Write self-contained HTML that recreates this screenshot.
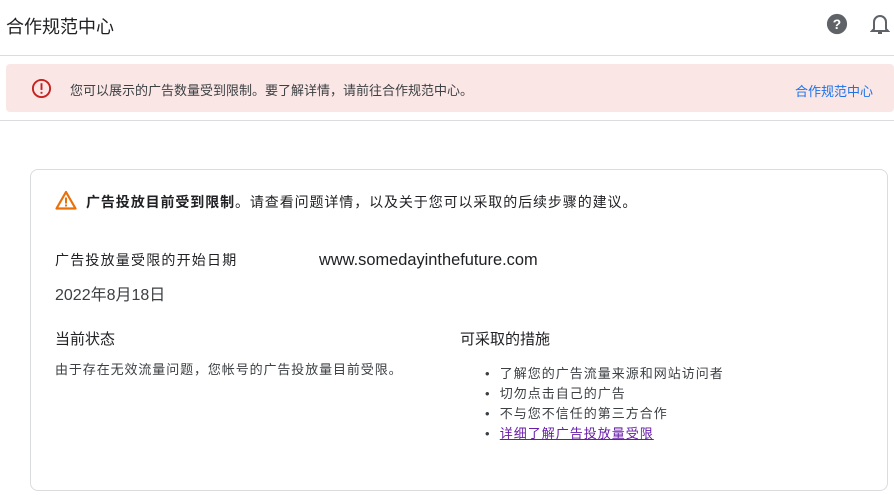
<!DOCTYPE html>
<html><head><meta charset="utf-8"><style>
*{margin:0;padding:0;box-sizing:border-box}
body{width:894px;height:495px;overflow:hidden;background:#fff;font-family:"Liberation Sans","Noto Sans CJK SC",sans-serif;color:#3c4043;position:relative}
.a{position:absolute;white-space:nowrap}
</style></head><body>
<div class="a" style="left:6px;top:13px;font-size:18px;color:#202124">合作规范中心</div>
<svg class="a" style="left:826px;top:13px" width="22" height="22" viewBox="0 0 24 24"><circle cx="12" cy="12" r="11" fill="#5f6368"/><text x="12" y="17.5" font-size="15" font-weight="bold" fill="#fff" text-anchor="middle" font-family="Liberation Sans">?</text></svg>
<svg class="a" style="left:870px;top:12px" width="20" height="24" viewBox="0 0 20 24"><path d="M4 17V10a6 6 0 0 1 12 0v7l2 2H2z" fill="none" stroke="#5f6368" stroke-width="2"/><path d="M8 21h4" stroke="#5f6368" stroke-width="2"/></svg>
<div class="a" style="left:0;top:55px;width:894px;height:1px;background:#dadce0"></div>
<div class="a" style="left:6px;top:64px;width:888px;height:48px;background:#fbe6e6;border-radius:4px"></div>
<svg class="a" style="left:31px;top:78px" width="21" height="21" viewBox="0 0 22 22"><circle cx="11" cy="11" r="9" fill="none" stroke="#c5221f" stroke-width="2"/><rect x="10" y="5.5" width="2" height="7" fill="#c5221f"/><rect x="10" y="14.5" width="2" height="2" fill="#c5221f"/></svg>
<div class="a" style="left:70px;top:80px;font-size:13px;color:#3c4043">您可以展示的广告数量受到限制。要了解详情，请前往合作规范中心。</div>
<div class="a" style="left:795px;top:81px;font-size:13px;color:#1a73e8">合作规范中心</div>
<div class="a" style="left:0;top:120px;width:894px;height:1px;background:#dadce0"></div>
<div class="a" style="left:30px;top:169px;width:858px;height:322px;border:1px solid #dadce0;border-radius:8px"></div>
<svg class="a" style="left:55px;top:190px" width="22" height="20" viewBox="0 0 22 20"><path d="M11 2L20.5 18.5H1.5Z" fill="none" stroke="#e8710a" stroke-width="2.2" stroke-linejoin="round"/><rect x="10" y="7.5" width="2" height="6" fill="#e8710a"/><rect x="10" y="14.5" width="2" height="2" fill="#e8710a"/></svg>
<div class="a" style="left:86px;top:192px;font-size:14px;letter-spacing:0.9px;color:#202124"><b>广告投放目前受到限制</b>。请查看问题详情，以及关于您可以采取的后续步骤的建议。</div>
<div class="a" style="left:55px;top:250px;font-size:14px;letter-spacing:1.2px;color:#202124">广告投放量受限的开始日期</div>
<div class="a" style="left:319px;top:251px;font-size:16.4px;color:#202124">www.somedayinthefuture.com</div>
<div class="a" style="left:55px;top:281px;font-size:16px;color:#3c4043">2022年8月18日</div>
<div class="a" style="left:55px;top:328px;font-size:15px;color:#202124">当前状态</div>
<div class="a" style="left:55px;top:359px;font-size:13px;letter-spacing:0.9px;color:#3c4043">由于存在无效流量问题，您帐号的广告投放量目前受限。</div>
<div class="a" style="left:460px;top:328px;font-size:15px;color:#202124">可采取的措施</div>
<div class="a" style="left:485px;top:364px;font-size:13px;line-height:20px;color:#3c4043;letter-spacing:1px">
<div>•&nbsp;&nbsp;了解您的广告流量来源和网站访问者</div>
<div>•&nbsp;&nbsp;切勿点击自己的广告</div>
<div>•&nbsp;&nbsp;不与您不信任的第三方合作</div>
<div>•&nbsp;&nbsp;<span style="color:#681da8;text-decoration:underline">详细了解广告投放量受限</span></div>
</div>
</body></html>
